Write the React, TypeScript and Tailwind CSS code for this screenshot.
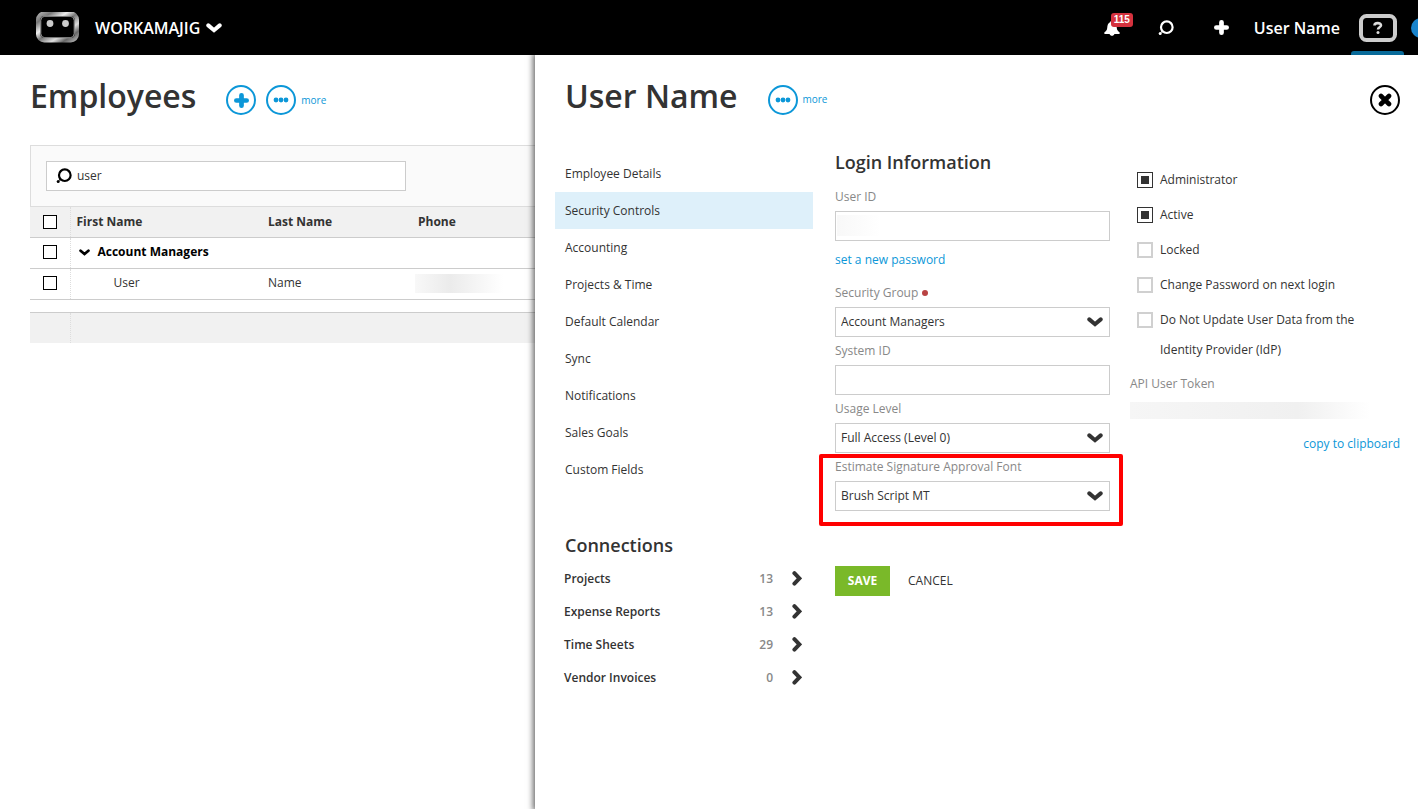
import { useState } from "react"
import type { ReactNode } from "react"

const menuItems = [
    "Employee Details",
    "Security Controls",
    "Accounting",
    "Projects & Time",
    "Default Calendar",
    "Sync",
    "Notifications",
    "Sales Goals",
    "Custom Fields",
]

const connections = [
    { name: "Projects", count: 13 },
    { name: "Expense Reports", count: 13 },
    { name: "Time Sheets", count: 29 },
    { name: "Vendor Invoices", count: 0 },
]

const flags = [
    { label: "Administrator", checked: true },
    { label: "Active", checked: true },
    { label: "Locked", checked: false },
    { label: "Change Password on next login", checked: false },
    { label: "Do Not Update User Data from the Identity Provider (IdP)", checked: false },
]

const ChevronDown = ({ className }: { className?: string }) => (
    <svg viewBox="0 0 16 10" className={className} fill="none" stroke="currentColor" strokeWidth="4" strokeLinecap="round">
        <path d="M2.3 2.4 L8 7.2 L13.7 2.4" />
    </svg>
)

const ChevronRight = () => (
    <svg viewBox="0 0 10 16" className="h-4 w-[10px]" fill="none" stroke="currentColor" strokeWidth="4" strokeLinecap="round">
        <path d="M2.4 2.2 L7.4 7.4 L2.4 12.6" />
    </svg>
)

const SearchIcon = () => (
    <svg viewBox="0 0 16 16" className="size-4" fill="none">
        <circle cx="8.8" cy="7.2" r="5.8" stroke="currentColor" strokeWidth="2.2" />
        <path d="M4.6 11.2 L3.4 12.4" stroke="currentColor" strokeWidth="1.6" />
        <circle cx="2.2" cy="13.6" r="1.5" fill="currentColor" />
    </svg>
)

const PlusIcon = ({ className }: { className?: string }) => (
    <svg viewBox="0 0 14 14" className={className} stroke="currentColor" strokeWidth="4.4" strokeLinecap="round">
        <path d="M7 2.2 V11.8 M2.2 7 H11.8" />
    </svg>
)

const RoundButton = ({ label, children }: { label: string; children: ReactNode }) => (
    <button aria-label={label} className="flex size-[30px] items-center justify-center rounded-full border-2 border-[#0c97d8] text-[#0c97d8]">
        {children}
    </button>
)

const MoreButton = () => (
    <div className="flex items-center gap-[5px]">
        <RoundButton label="more actions">
            <svg viewBox="0 0 16 6" className="h-[6px] w-4" fill="currentColor">
                <circle cx="3" cy="3" r="2.4" />
                <circle cx="8" cy="3" r="2.4" />
                <circle cx="13" cy="3" r="2.4" />
            </svg>
        </RoundButton>
        <a href="#" className="text-[10px] text-[#0c97d8]">more</a>
    </div>
)

const Header = () => (
    <header className="flex h-[55px] items-center overflow-hidden bg-black pl-9 text-white">
        <svg viewBox="0 0 44 32" className="h-8 w-11" aria-label="Workamajig">
            <defs>
                <linearGradient id="metal" x1="0" y1="0" x2="1" y2="1">
                    <stop offset="0" stopColor="#aaa" />
                    <stop offset="0.15" stopColor="#777" />
                    <stop offset="0.35" stopColor="#eee" />
                    <stop offset="0.5" stopColor="#777" />
                    <stop offset="0.7" stopColor="#ddd" />
                    <stop offset="0.85" stopColor="#666" />
                    <stop offset="1" stopColor="#aaa" />
                </linearGradient>
            </defs>
            <rect x="2.2" y="1.7" width="38.6" height="26.6" rx="6" fill="#000" stroke="url(#metal)" strokeWidth="4.4" />
            <rect x="4.8" y="4.3" width="33.4" height="21.4" rx="4" fill="none" stroke="#bbb" strokeWidth="0.8" />
            <circle cx="14" cy="11.5" r="3.4" fill="#ccc" />
            <circle cx="29.5" cy="11.5" r="3.4" fill="#ccc" />
        </svg>
        <button className="ml-[15px] flex items-center gap-[6px] text-base font-semibold">
            WORKAMAJIG
            <ChevronDown className="h-[10px] w-4" />
        </button>
        <div className="ml-auto flex h-full items-center">
            <button aria-label="notifications" className="relative">
                <svg viewBox="0 0 16 16" className="size-4" fill="currentColor">
                    <path d="M8 0.5 C9 0.5 9.6 1.2 9.6 2 C12 3 12.6 5 12.8 8 C13 10.5 14 11 15.6 12.2 V14 H0.4 V12.2 C2 11 3 10.5 3.2 8 C3.4 5 4 3 6.4 2 C6.4 1.2 7 0.5 8 0.5 Z M5.6 14 H10.4 C10 16.4 6 16.4 5.6 14 Z" />
                </svg>
                <span className="absolute -top-[7px] left-[7px] rounded-[3px] bg-[#d4323e] px-[3px] font-['Liberation_Sans',sans-serif] text-[10px] leading-[14px] font-bold">115</span>
            </button>
            <button aria-label="search" className="ml-[38px]"><SearchIcon /></button>
            <button aria-label="add" className="ml-[40px]"><PlusIcon className="size-[15px]" /></button>
            <button className="ml-[25px] text-base font-semibold">User Name</button>
            <button aria-label="help" className="relative ml-[11px] flex h-full w-[53px] items-center justify-center">
                <svg viewBox="0 0 38 28" className="h-7 w-[38px]">
                    <rect x="2" y="2" width="34" height="24" rx="5.5" fill="#000" stroke="#ccc" strokeWidth="4" />
                    <path d="M15.5 11.5 C15.5 8.4 22 8.4 22 11.3 C22 13.4 19 13.2 19 15.6" fill="none" stroke="#ddd" strokeWidth="2.6" />
                    <circle cx="19" cy="18.4" r="1.5" fill="#ddd" />
                </svg>
                <span className="absolute inset-x-0 bottom-0 h-1 rounded-t-[3px] bg-[#086a99]" />
            </button>
            <span className="ml-[7px] -mr-[13px] size-5 rounded-full bg-[#1a84cc]" />
        </div>
    </header>
)

const RowCheck = ({ label }: { label: string }) => (
    <input type="checkbox" aria-label={label} className="block size-[14px] appearance-none border border-black bg-white checked:bg-black checked:shadow-[inset_0_0_0_2px_white]" />
)

const Employees = () => (
    <section className="w-[535px] shrink-0 overflow-hidden pl-[30px]">
        <div className="flex h-[90px] items-center">
            <h1 className="pb-2 text-[32px] font-semibold text-[#333]">Employees</h1>
            <div className="ml-[30px] flex gap-[10px]">
                <RoundButton label="add employee"><PlusIcon className="size-[15px]" /></RoundButton>
                <MoreButton />
            </div>
        </div>
        <div className="border-t border-l border-[#ddd] bg-[#fafafa] p-[15px]">
            <label className="flex h-[30px] w-[360px] items-center gap-[5px] border border-[#ccc] bg-white pl-[9px] text-black">
                <SearchIcon />
                <input type="text" aria-label="Search employees" defaultValue="user" className="min-w-0 flex-1 text-xs text-[#333] outline-none" />
            </label>
        </div>
        <table className="w-full table-fixed border-collapse text-left text-xs text-[#333]">
            <colgroup>
                <col className="w-10" />
                <col className="w-[192px]" />
                <col className="w-[150px]" />
                <col />
            </colgroup>
            <thead>
                <tr className="h-[31px] border-t border-b border-t-[#ddd] border-b-[#ccc] bg-[#f1f1f1]">
                    <th className="border-r border-dotted border-r-[#ddd] pl-[13px]"><RowCheck label="Select all" /></th>
                    <th className="pl-[6px] font-bold">First Name</th>
                    <th className="pl-[6px] font-bold">Last Name</th>
                    <th className="pl-[6px] font-bold">Phone</th>
                </tr>
            </thead>
            <tbody>
                <tr className="h-[31px] border-b border-[#ccc]">
                    <td className="border-r border-dotted border-r-[#ddd] pb-[2px] pl-[13px]"><RowCheck label="Select Account Managers" /></td>
                    <td colSpan={3} className="pb-[2px] pl-[8px] font-bold text-black">
                        <button className="flex items-center gap-2">
                            <ChevronDown className="h-[7px] w-[11px]" />
                            Account Managers
                        </button>
                    </td>
                </tr>
                <tr className="h-[31px] border-b border-[#ccc]">
                    <td className="border-r border-dotted border-r-[#ddd] pb-[2px] pl-[13px]"><RowCheck label="Select User Name" /></td>
                    <td className="pb-[2px] pl-[43px]">User</td>
                    <td className="pb-[2px] pl-[6px]">Name</td>
                    <td className="pb-[2px] pl-[3px]">
                        <div className="h-[19px] w-[88px] bg-linear-to-r from-[#f8f8f8] via-[#ebebeb] via-40% to-white" />
                    </td>
                </tr>
                <tr className="h-[13px] border-b border-[#ccc]">
                    <td colSpan={4} />
                </tr>
            </tbody>
            <tfoot>
                <tr className="h-[30px] bg-[#f1f1f1]">
                    <td className="border-r border-dotted border-r-[#ddd]" />
                    <td colSpan={3} />
                </tr>
            </tfoot>
        </table>
    </section>
)

const SelectField = ({ id, label, options, required }: { id: string; label: string; options: string[]; required?: boolean }) => (
    <div>
        <label htmlFor={id} className="flex h-7 items-center gap-1 text-[#888]">
            {label}
            {required && <span className="size-[6px] rounded-full bg-[#b94343]" />}
        </label>
        <div className="relative">
            <select id={id} className="h-[30px] w-full appearance-none border border-[#ccc] bg-white pr-8 pl-[5px] text-[#333]">
                {options.map((option) => (
                    <option key={option}>{option}</option>
                ))}
            </select>
            <ChevronDown className="pointer-events-none absolute top-[10px] right-[7px] h-[10px] w-4 text-[#333]" />
        </div>
    </div>
)

const TextField = ({ id, label, hidden }: { id: string; label: string; hidden?: boolean }) => (
    <div>
        <label htmlFor={id} className="flex h-7 items-center text-[#888]">{label}</label>
        <div className="relative">
            <input id={id} type="text" className="block h-[30px] w-full border border-[#ccc] bg-white px-[5px]" />
            {hidden && <span className="absolute top-1 left-[2px] h-[21px] w-11 bg-linear-to-r from-[#f8f8f8] to-white" />}
        </div>
    </div>
)

const UserPanel = () => {

    const [active, setActive] = useState("Security Controls")

    return (
        <main className="min-w-0 flex-1 bg-white pr-[18px] pl-5 text-xs text-[#333] shadow-[0_0_6px_2px_rgba(0,0,0,0.6)]">
            <div className="flex h-[90px] items-center pl-[10px]">
                <h1 className="pb-2 text-[32px] font-semibold text-[#333]">User Name</h1>
                <div className="ml-[30px]"><MoreButton /></div>
                <button aria-label="close" className="ml-auto flex size-[30px] items-center justify-center rounded-full border-2 border-black text-black">
                    <svg viewBox="0 0 14 14" className="size-[14px]" stroke="currentColor" strokeWidth="4.6" strokeLinecap="round">
                        <path d="M3 3 L11 11 M11 3 L3 11" />
                    </svg>
                </button>
            </div>
            <div className="flex">
                <div className="w-[258px] shrink-0 pt-[10px]">
                    <nav>
                        {menuItems.map((item) => (
                            <button
                                key={item}
                                onClick={() => setActive(item)}
                                className={`block h-[37px] w-full pl-[10px] text-left ${item === active ? "bg-[#def0fa]" : ""}`}
                            >
                                {item}
                            </button>
                        ))}
                    </nav>
                    <h2 className="mt-[43px] pl-[10px] text-lg font-semibold">Connections</h2>
                    <ul className="mt-[3px]">
                        {connections.map((item) => (
                            <li key={item.name}>
                                <a href="#" className="flex h-[33px] items-center pr-[11px] pl-[9px] font-semibold">
                                    {item.name}
                                    <span className="mr-[19px] ml-auto text-[#888]">{item.count}</span>
                                    <ChevronRight />
                                </a>
                            </li>
                        ))}
                    </ul>
                </div>
                <form className="ml-[22px] w-[275px] shrink-0 pt-[3px]" onSubmit={(e) => e.preventDefault()}>
                    <h2 className="mb-[7px] text-lg font-semibold">Login Information</h2>
                    <TextField id="user-id" label="User ID" hidden />
                    <div className="flex h-[38px] items-center">
                        <a href="#" className="text-[#0c97d8]">set a new password</a>
                    </div>
                    <SelectField id="security-group" label="Security Group" options={["Account Managers", "Administrators"]} required />
                    <TextField id="system-id" label="System ID" />
                    <SelectField id="usage-level" label="Usage Level" options={["Full Access (Level 0)", "Limited Access (Level 1)"]} />
                    <div className="relative">
                        <SelectField id="signature-font" label="Estimate Signature Approval Font" options={["Brush Script MT", "Arial"]} />
                        <div className="pointer-events-none absolute top-[1px] -right-[13px] -bottom-[15px] -left-4 rounded-[2px] border-4 border-[#f00]" />
                    </div>
                    <div className="mt-[55px] flex h-[30px] gap-[18px]">
                        <button type="submit" className="w-[55px] bg-[#7ab929] font-bold text-white">SAVE</button>
                        <button type="button">CANCEL</button>
                    </div>
                </form>
                <div className="ml-5 min-w-0 flex-1 pt-5">
                    <div className="flex flex-col gap-[5px] pl-[7px] leading-[30px]">
                        {flags.map((flag) => (
                            <label key={flag.label} className="flex max-w-[246px] gap-[7px]">
                                <input
                                    type="checkbox"
                                    defaultChecked={flag.checked}
                                    className="mt-[7px] size-4 shrink-0 appearance-none border-2 border-[#d0d0d0] bg-white checked:border checked:border-[#333] checked:bg-[#333] checked:shadow-[inset_0_0_0_3px_white]"
                                />
                                {flag.label}
                            </label>
                        ))}
                    </div>
                    <p className="mt-[5px] leading-7 text-[#888]">API User Token</p>
                    <div className="mt-1 h-[17px] w-[240px] bg-linear-to-r from-[#f6f6f6] via-[#f0f0f0] via-70% to-white" />
                    <div className="mt-[17px] text-right">
                        <a href="#" className="text-[#0c97d8]">copy to clipboard</a>
                    </div>
                </div>
            </div>
        </main>
    )
}

export default function App() {
    return (
        <div className="flex min-h-screen flex-col overflow-hidden bg-white font-['Open_Sans',sans-serif]">
            <Header />
            <div className="flex flex-1 overflow-hidden">
                <Employees />
                <UserPanel />
            </div>
        </div>
    )
}
